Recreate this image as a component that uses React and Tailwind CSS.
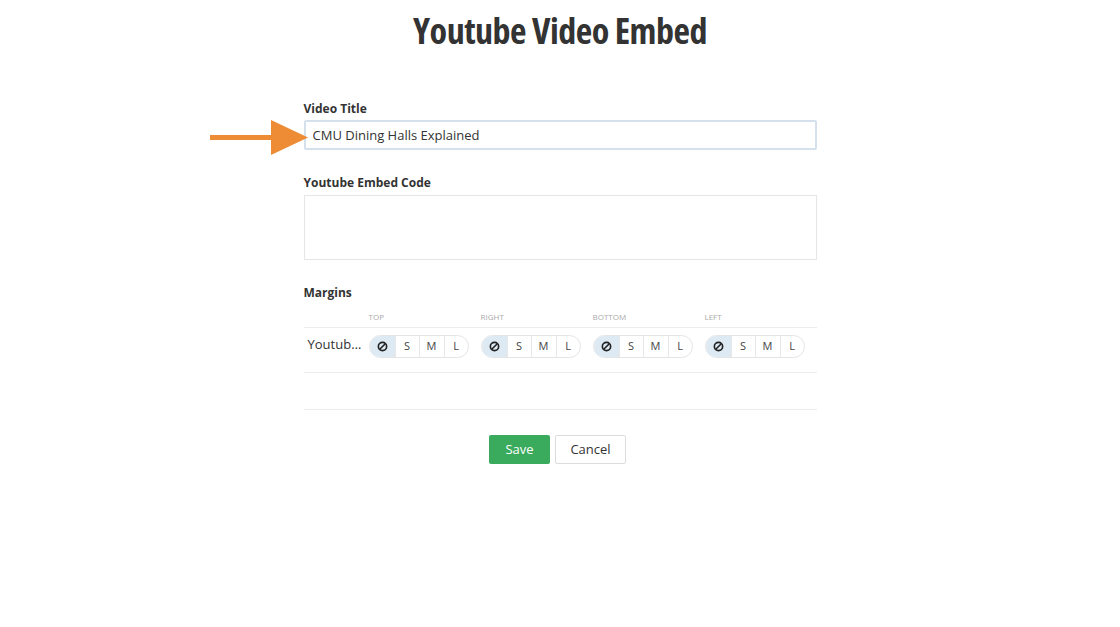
import React from 'react';

const sides = ['Top', 'Right', 'Bottom', 'Left'];

function NoneIcon() {
    return (
        <svg width="11" height="11" viewBox="0 0 12 12" fill="none" stroke="#222" strokeWidth="1.8">
            <circle cx="6" cy="6" r="4.5" />
            <line x1="3" y1="9" x2="9" y2="3" />
        </svg>
    );
}

function SizePicker() {
    return (
        <div className="flex h-[23px] w-[100px] rounded-full border border-[#e4e4e4] overflow-hidden text-[11px] text-[#444]">
            <div className="flex w-[25px] items-center justify-center bg-[#dde9f3]">
                <NoneIcon />
            </div>
            <div className="flex w-[24px] items-center justify-center border-l border-[#e8e8e8] text-[#444]">S</div>
            <div className="flex w-[25px] items-center justify-center border-l border-[#e8e8e8] text-[#444]">M</div>
            <div className="flex flex-1 items-center justify-center border-l border-[#e8e8e8] text-[#444]">L</div>
        </div>
    );
}

function Arrow() {
    return (
        <svg className="absolute left-[-94px] top-[0px]" width="100" height="36" viewBox="0 0 100 36">
            <rect x="0" y="15" width="64" height="5" fill="#ee8b35" />
            <polygon points="61,0 98,17.5 61,35" fill="#ee8b35" />
        </svg>
    );
}

export default function App() {
    return (
        <div className="min-h-screen bg-white font-['Open_Sans',sans-serif] text-[#333]">
            <h1 className="pt-[9px] text-center text-[36px] font-bold leading-[44px] text-[#333] [font-stretch:75%] tracking-[-0.5px]">
                Youtube Video Embed
            </h1>

            <div className="mx-auto mt-[48px] w-[513px]">
                <label className="block text-[12px] font-bold leading-[16px] text-[#333]">Video Title</label>
                <div className="relative mt-[3px]">
                    <Arrow />
                    <input
                        readOnly
                        value="CMU Dining Halls Explained"
                        className="h-[30px] w-full rounded-[2px] border-2 border-[#d4e1ed] px-[7px] text-[13px] text-[#333] outline-none"
                    />
                </div>

                <label className="mt-[25px] block text-[12px] font-bold leading-[16px] text-[#333]">Youtube Embed Code</label>
                <textarea readOnly className="mt-[4px] block h-[65px] w-full resize-none border border-[#e6e6e6] outline-none" />

                <label className="mt-[25px] block text-[12px] font-bold leading-[16px] text-[#333]">Margins</label>

                <div className="mt-[10px] flex pl-[65px] text-[8px] uppercase leading-[12px] text-[#aaa]">
                    {sides.map((s) => (
                        <div key={s} className="w-[112px]">{s}</div>
                    ))}
                </div>
                <div className="mt-[4px] flex h-[46px] items-start border-y border-[#ececec] pt-[7px]">
                    <div className="w-[65px] truncate pl-[4px] pr-[6px] text-[13px] leading-[18px] text-[#333]">Youtube Video</div>
                    {sides.map((s) => (
                        <div key={s} className="w-[112px]">
                            <SizePicker />
                        </div>
                    ))}
                </div>

                <div className="mt-[36px] border-t border-[#ececec]" />

                <div className="mt-[25px] flex justify-center gap-[5px] pr-[5px]">
                    <button className="h-[29px] w-[61px] rounded-[2px] bg-[#3aaa5c] text-[13px] text-white">Save</button>
                    <button className="h-[29px] w-[71px] rounded-[2px] border border-[#dcdcdc] bg-white text-[13px] text-[#333]">Cancel</button>
                </div>
            </div>
        </div>
    );
}
